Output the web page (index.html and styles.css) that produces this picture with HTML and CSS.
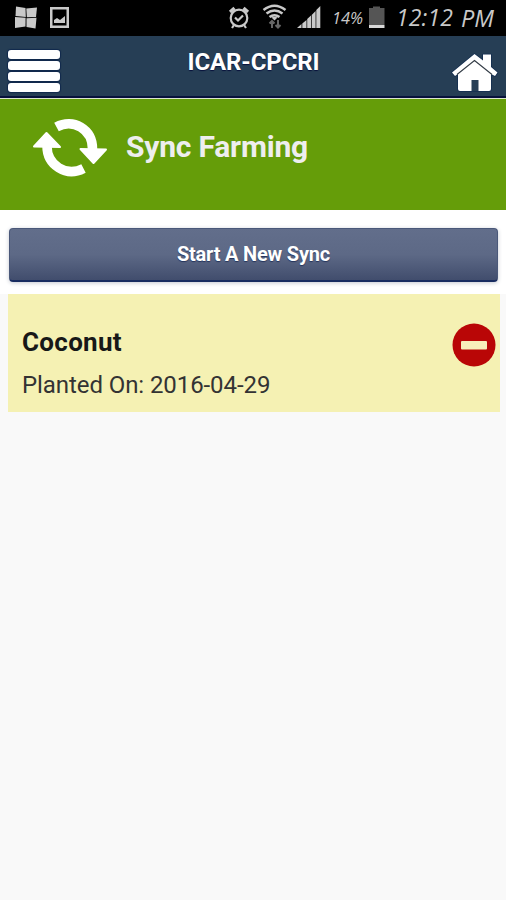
FILE: index.html
```html
<!DOCTYPE html>
<html lang="en">
<head>
<meta charset="utf-8">
<title>Sync Farming</title>
<link rel="stylesheet" href="styles.css">
</head>
<body>
<div class="status">
  <svg class="status-left" width="60" height="28" viewBox="14 4 60 28">
    <g fill="#c9c9c9"><path d="M16 6.500L25.500 8L25.800 17L15.500 16Z"/><path d="M26.300 8.500L37 7.500L36 17L26.800 17.300Z"/><path d="M15 17L25.600 17.800L25.500 26.500L15 28Z"/><path d="M26.500 18.300L36.500 17.800L35.500 28.500L26.500 27Z"/></g>
    <path fill="#c9c9c9" fill-rule="evenodd" d="M50 7H69V28H50ZM52.500 9.500V25.500H66.500V9.500Z"/>
    <path fill="#c9c9c9" d="M54 23V20L57 18L60 20L65 16V23Z"/>
  </svg>
  <svg class="status-icons" width="160" height="28" viewBox="228 4 160 28">
    <g fill="none" stroke="#c9c9c9" stroke-width="2.200">
      <circle cx="239" cy="18" r="8.300"/><path d="M235 17.500L238 20.500L243 15.500"/>
      <path stroke-width="3.200" d="M230 12L234.500 8M248 12L243.500 8"/><path d="M234 25L232 28M244 25L246 28"/>
      <path stroke-width="2.500" d="M263.500 10Q274.500 1.500 285.500 10M266.500 13.500Q274.500 7.500 282.500 13.500M269.500 17Q274.500 13.500 279.500 17"/>
    </g>
    <path fill="#c9c9c9" d="M271.500 17.500Q274.500 16 277.500 17.500L274.500 20.500Z"/>
    <path fill="none" stroke="#666" stroke-width="2" d="M272 28V21M269.500 23.500L272 21L274.500 23.500M278 20V27M275.500 25L278 27.500L280.500 25"/>
    <path fill="#c9c9c9" d="M297 28L301.500 24V28ZM302.300 23.500L306.500 20V28H302.300ZM307.200 19L311 15.500V28H307.200ZM311.700 15L315.600 11V28H311.700ZM316.300 10L320.300 6V28H316.300Z"/>
    <text class="percent" x="332" y="24" textLength="31" lengthAdjust="spacingAndGlyphs">14%</text>
    <path fill="#555" d="M369 8H373V6.500H380V8H384.500V25H369Z"/><path fill="#d8d8d8" d="M369 25H384.500V28H369Z"/>
  </svg>
  <svg class="status-clock" width="108" height="36" viewBox="394 0 108 36">
    <text class="clock" x="396" y="25.500" textLength="57" lengthAdjust="spacing">12:12</text>
    <text class="clock" x="461" y="27" textLength="33" lengthAdjust="spacingAndGlyphs">PM</text>
  </svg>
</div>
<header class="bar">
  <div class="menu"><i></i><i></i><i></i><i></i></div>
  <h1>ICAR-CPCRI</h1>
  <svg class="home" width="48" height="41" viewBox="451 52 48 41">
    <g stroke="#122c50" stroke-width="1.500" paint-order="stroke" fill="#fff" stroke-linejoin="round">
    <path d="M474.500 54L483 60.500V54.500H491V67L497.500 72.500L495 76L491 74V89Q491 91 489 91H460Q458 91 458 89V74L455 76L452 72.500Z"/></g>
    <path d="M457 74.500L474.500 60.500L492 74.500" fill="none" stroke="#333c46" stroke-width="1.100"/>
    <path d="M471.500 91V80H478.500V91Z" fill="#263e55"/>
  </svg>
</header>
<section class="hero">
  <svg width="76" height="62" viewBox="32 117 76 62" fill="none" stroke="#fff" stroke-width="9.500">
    <path d="M56.500 127C73 118 92.500 129 92.500 149M83.500 168.500C66 177.500 47 165 47 146"/>
    <path fill="#fff" stroke="#fff" stroke-width="2" stroke-linejoin="round" d="M80.500 149L106 149.500L93.500 163ZM34 146.500L46.500 133L60 147Z"/>
  </svg>
  <h2>Sync Farming</h2>
</section>
<main>
  <div class="action"><button>Start A New Sync</button></div>
  <article class="crop">
    <div><h3>Coconut</h3><p>Planted On: 2016-04-29</p></div>
    <svg width="44" height="44" viewBox="0 0 44 44"><circle cx="22" cy="22" r="21.500" fill="#b90606"/><rect x="9" y="18" width="26" height="8.500" rx="1" fill="#f8efba"/></svg>
  </article>
</main>
</body>
</html>
```
FILE: styles.css
```css
* { box-sizing: border-box; }
body { margin: 0; min-height: 900px; background: #f9f9f9; font-family: Roboto, sans-serif; }
h1, h2, h3, p { margin: 0; }
svg { display: block; flex: none; }
.status { height: 36px; background: #000; display: flex; align-items: flex-start; padding: 0 4px 0 14px; }
.status-left, .status-icons { margin-top: 4px; }
.status-icons { margin-left: 154px; }
.status-clock { margin-left: 6px; }
.percent { font: italic 17px "Open Sans", sans-serif; fill: #c9c9c9; }
.clock { font: italic 23px "Open Sans", sans-serif; fill: #c9c9c9; }
.bar { height: 63px; background: #263e55; border-bottom: 1px solid #dce5d0; box-shadow: inset 0 -2px #07113c; display: grid; grid-template-columns: 60px 1fr 60px; padding: 0 7px 0 8px; }
.menu { display: flex; flex-direction: column; gap: 2px; padding-top: 14px; }
.menu i { width: 52px; height: 9px; border-radius: 3px; background: #fff; box-shadow: 0 0 1px 1px #10294d; }
h1 { color: #fff; font-size: 24px; letter-spacing: -0.1px; line-height: 28px; padding-top: 12px; text-align: center; white-space: nowrap; text-shadow: 0 1px 1px #07113c; }
.home { margin-top: 16px; justify-self: end; }
.hero { height: 111px; background: #659d09; display: flex; padding: 18px 0 0 32px; }
h2 { color: #eee; font-size: 30px; letter-spacing: -0.2px; line-height: 36px; margin: 12px 0 0 18px; white-space: nowrap; }
.action { background: #fff; padding: 18px 8px 11px 9px; height: 84px; }
button { display: block; width: 100%; height: 54px; border: 1px solid #4a5879; border-bottom: 2px solid #182c60; border-radius: 4px; background: linear-gradient(#626e8b, #5d6986 50%, #414d6d); box-shadow: 0 1px 4px #c4c8d0; color: #fff; font: bold 20px/24px Roboto, sans-serif; letter-spacing: -0.2px; text-shadow: 0 1px 1px #25345c; padding: 0 0 2px; }
.crop { margin: 0 6px 0 8px; height: 118px; background: #f5f1b3; display: flex; justify-content: space-between; padding: 29px 4px 0 14px; }
h3 { font-size: 26px; letter-spacing: 0.3px; line-height: 38px; color: #181818; }
.crop p { font-size: 24px; letter-spacing: -0.08px; line-height: 28px; margin-top: 10px; color: #333; white-space: nowrap; }
```
